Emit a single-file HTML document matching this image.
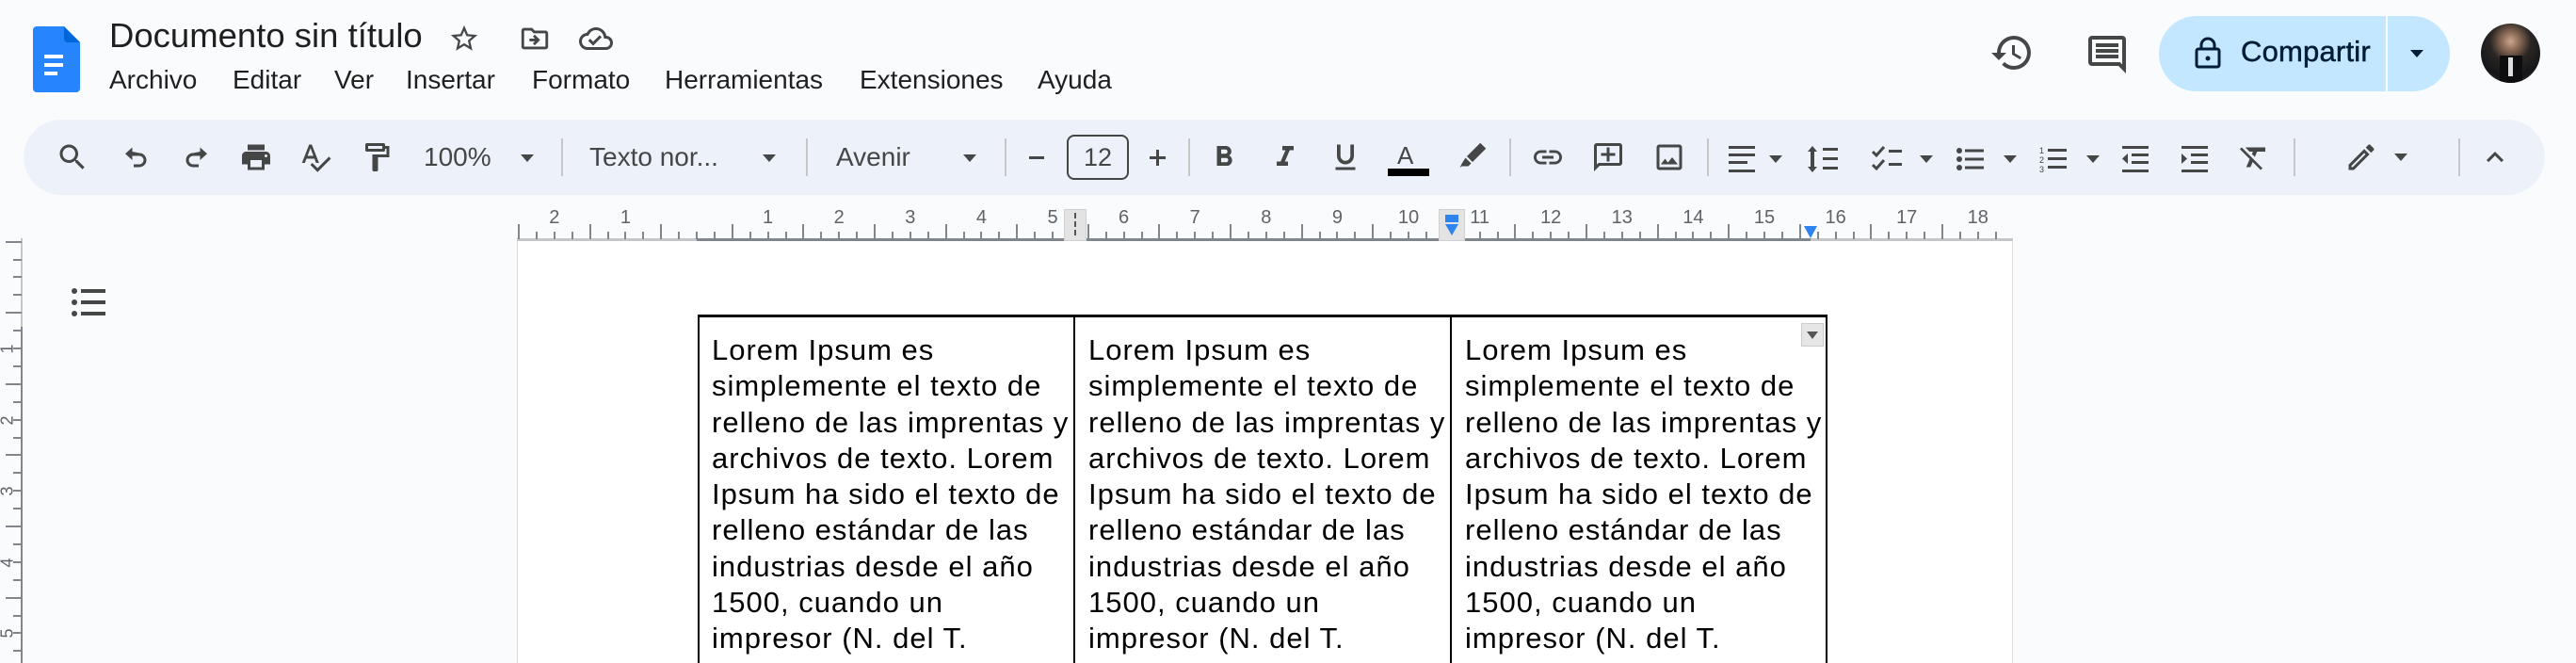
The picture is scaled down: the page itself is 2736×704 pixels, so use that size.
<!DOCTYPE html>
<html><head><meta charset="utf-8">
<style>
*{margin:0;padding:0;box-sizing:border-box}
html{width:2736px;height:704px;overflow:hidden}
body{width:2736px;height:704px;overflow:hidden;background:#f9fbfd;font-family:"Liberation Sans",sans-serif;position:relative;color:#1f1f1f}
.a{position:absolute}
svg.i{position:absolute;fill:#444746}
.menu span{position:absolute;top:69px;font-size:28px;color:#1f1f1f}
.tb{position:absolute;left:25px;top:127px;width:2678px;height:80px;background:#edf2fa;border-radius:40px}
.sep{position:absolute;top:147px;width:2px;height:40px;background:#c7c7c7}
.dd{position:absolute;width:0;height:0;border-left:7px solid transparent;border-right:7px solid transparent;border-top:8px solid #444746}
.tt{position:absolute;font-size:28px;color:#444746;top:151px}
.rn{position:absolute;top:220px;font-size:20px;color:#5f6368;width:30px;text-align:center;margin-left:-15px}
.cell{position:absolute;top:353px;font-size:31px;line-height:38.3px;letter-spacing:1px;white-space:nowrap;color:#000}
#clip{position:absolute;left:0;top:0;width:2736px;height:704px;overflow:hidden}
</style></head><body><div id="clip">

<svg class="a" style="left:35px;top:28px" width="50" height="70" viewBox="0 0 50 70">
<path d="M4 0H33L50 17V66a4 4 0 0 1-4 4H4a4 4 0 0 1-4-4V4a4 4 0 0 1 4-4z" fill="#2684fc"/>
<path d="M33 0L50 17H37a4 4 0 0 1-4-4z" fill="#0066da"/>
<rect x="12" y="30" width="20" height="4" fill="#fff"/><rect x="12" y="39" width="20" height="4" fill="#fff"/><rect x="12" y="48" width="14" height="4" fill="#fff"/>
</svg>
<div class="a" style="left:116px;top:17px;font-size:36.5px;color:#1f1f1f">Documento sin título</div>
<svg class="i" style="left:476px;top:24px" width="34" height="34" viewBox="0 0 24 24"><path d="M22 9.24l-7.19-.62L12 2 9.19 8.63 2 9.24l5.46 4.73L5.82 21 12 17.27 18.18 21l-1.63-7.03L22 9.24zM12 15.4l-3.76 2.27 1-4.28-3.32-2.88 4.38-.38L12 6.1l1.71 4.04 4.38.38-3.32 2.88 1 4.28L12 15.4z"/></svg>
<svg class="i" style="left:551px;top:24px" width="34" height="34" viewBox="0 0 24 24"><path d="M20 6h-8l-2-2H4c-1.1 0-2 .9-2 2v12c0 1.1.9 2 2 2h16c1.1 0 2-.9 2-2V8c0-1.1-.9-2-2-2zm0 12H4V6h5.17l2 2H20v10zm-7.84-6H8v2h4.16l-1.59 1.59L11.99 17 16 13.01 11.99 9l-1.41 1.41L12.16 12z"/></svg>
<svg class="i" style="left:615px;top:23px" width="36" height="36" viewBox="0 0 24 24"><path d="M19.35 10.04A7.49 7.49 0 0 0 12 4C9.11 4 6.6 5.64 5.35 8.04A5.994 5.994 0 0 0 0 14c0 3.310 2.690 6 6 6h13c2.76 0 5-2.24 5-5 0-2.64-2.05-4.78-4.65-4.96zM19 18H6c-2.21 0-4-1.79-4-4 0-2.05 1.53-3.76 3.56-3.97l1.07-.11.5-.95A5.469 5.469 0 0 1 12 6c2.62 0 4.88 1.86 5.39 4.43l.3 1.5 1.53.11A2.98 2.98 0 0 1 22 15c0 1.65-1.35 3-3 3zm-9-3.820l-2.09-2.09L6.5 13.5 10 17l6.01-6.01-1.41-1.41z"/></svg>

<div class="menu">
<span style="left:116px">Archivo</span><span style="left:247px">Editar</span><span style="left:355px">Ver</span><span style="left:431px">Insertar</span><span style="left:565px">Formato</span><span style="left:706px">Herramientas</span><span style="left:913px">Extensiones</span><span style="left:1102px">Ayuda</span>
</div>

<svg class="i" style="left:2113px;top:32px" width="48" height="48" viewBox="0 0 24 24"><path d="M13 3a9 9 0 0 0-9 9H1l3.89 3.89.07.14L9 12H6c0-3.87 3.13-7 7-7s7 3.13 7 7-3.13 7-7 7c-1.93 0-3.68-.79-4.94-2.06l-1.42 1.42A8.954 8.954 0 0 0 13 21a9 9 0 0 0 0-18zm-1 5v5l4.28 2.54.72-1.21-3.5-2.08V8H12z"/></svg>
<svg class="i" style="left:2214px;top:34px" width="48" height="48" viewBox="0 0 24 24"><path d="M21.99 4c0-1.1-.89-2-1.99-2H4c-1.1 0-2 .9-2 2v12c0 1.1.9 2 2 2h14l4 4-.01-18zM20 4v13.17L18.83 16H4V4h16zM6 12h12v2H6zm0-3h12v2H6zm0-3h12v2H6z"/></svg>
<div class="a" style="left:2293px;top:17px;width:309px;height:80px;background:#c2e7ff;border-radius:40px"></div>
<div class="a" style="left:2534px;top:17px;width:2px;height:80px;background:#f9fbfd"></div>
<svg class="a" style="left:2330px;top:39px" width="30" height="34" viewBox="0 0 30 34"><rect x="3" y="13" width="24" height="19" rx="2" fill="none" stroke="#001d35" stroke-width="3"/><path d="M8 13V9a7 7 0 0 1 14 0v4" fill="none" stroke="#001d35" stroke-width="3"/><circle cx="15" cy="23" r="2.5" fill="#001d35"/></svg>
<div class="a" style="left:2380px;top:37px;font-size:31px;color:#001d35;letter-spacing:0.2px;-webkit-text-stroke:0.5px #001d35">Compartir</div>
<div class="dd" style="left:2560px;top:53px;border-top-color:#001d35"></div>
<div class="a" style="left:2635px;top:25px;width:63px;height:63px;border-radius:50%;background:radial-gradient(circle at 50% 30%,#c9a58c 0,#8a6a55 18%,#2a2623 40%,#15161a 70%,#3a3a40 100%);overflow:hidden"><div class="a" style="left:20px;top:34px;width:24px;height:30px;background:#0d0d10"></div><div class="a" style="left:29px;top:36px;width:5px;height:20px;background:#ddd"></div></div>

<div class="tb"></div>
<svg class="i" style="left:59px;top:149px" width="36" height="36" viewBox="0 0 24 24"><path d="M15.5 14h-.79l-.28-.27A6.47 6.47 0 0 0 16 9.5 6.5 6.5 0 1 0 9.5 16c1.61 0 3.09-.59 4.23-1.57l.27.28v.79l5 4.99L20.49 19l-4.99-5zm-6 0C7.01 14 5 11.99 5 9.5S7.01 5 9.5 5 14 7.01 14 9.5 11.99 14 9.5 14z"/></svg>
<svg class="i" style="left:127px;top:149px" width="36" height="36" viewBox="0 0 24 24"><path d="M9 10V7l-5 4.5L9 16v-3h5a3 3 0 0 1 0 6h-4v2h4a5 5 0 0 0 0-10z" transform="translate(0,-2)"/></svg>
<svg class="i" style="left:190px;top:149px" width="36" height="36" viewBox="0 0 24 24"><path d="M15 10V7l5 4.5L15 16v-3h-5a3 3 0 0 0 0 6h4v2h-4a5 5 0 0 1 0-10z" transform="translate(0,-2)"/></svg>
<svg class="i" style="left:254px;top:149px" width="36" height="36" viewBox="0 0 24 24"><path d="M19 8H5c-1.66 0-3 1.34-3 3v6h4v4h12v-4h4v-6c0-1.66-1.34-3-3-3zm-3 11H8v-5h8v5zm3-7c-.55 0-1-.45-1-1s.45-1 1-1 1 .45 1 1-.45 1-1 1zm-1-9H6v4h12V3z"/></svg>
<svg class="i" style="left:317px;top:149px" width="36" height="36" viewBox="0 0 24 24"><path d="M12.45 16h2.09L9.43 3H7.57L2.46 16h2.09l1.12-3h5.64l1.14 3zm-6.02-5L8.5 5.48 10.57 11H6.43zm15.16.59l-8.09 8.09L9.83 16l-1.41 1.41 5.09 5.09L23 13l-1.41-1.41z"/></svg>
<svg class="i" style="left:382px;top:149px" width="36" height="36" viewBox="0 0 24 24"><path d="M18 4V3c0-.55-.45-1-1-1H5c-.55 0-1 .45-1 1v4c0 .55.45 1 1 1h12c.55 0 1-.45 1-1V6h1v4H9v11c0 .55.45 1 1 1h2c.55 0 1-.45 1-1v-9h8V4h-3zm-2 2H6V4h10v2z"/></svg>
<div class="tt" style="left:450px">100%</div><div class="dd" style="left:553px;top:164px"></div>
<div class="sep" style="left:596px"></div>
<div class="tt" style="left:626px">Texto nor...</div><div class="dd" style="left:810px;top:164px"></div>
<div class="sep" style="left:856px"></div>
<div class="tt" style="left:888px">Avenir</div><div class="dd" style="left:1023px;top:164px"></div>
<div class="sep" style="left:1067px"></div>
<div class="a" style="left:1093px;top:166px;width:16px;height:3px;background:#444746"></div>
<div class="a" style="left:1133px;top:143px;width:66px;height:48px;border:2px solid #444746;border-radius:8px;font-size:27px;color:#444746;text-align:center;line-height:44px">12</div>
<div class="a" style="left:1221px;top:166px;width:17px;height:3px;background:#444746"></div><div class="a" style="left:1228px;top:159px;width:3px;height:17px;background:#444746"></div>
<div class="sep" style="left:1262px"></div>
<svg class="i" style="left:1282px;top:149px" width="36" height="36" viewBox="0 0 24 24"><path d="M15.6 10.79c.97-.67 1.65-1.77 1.65-2.79 0-2.26-1.75-4-4-4H7v14h7.04c2.09 0 3.71-1.7 3.71-3.79 0-1.52-.86-2.82-2.15-3.42zM10 6.5h3c.83 0 1.5.67 1.5 1.5s-.67 1.5-1.5 1.5h-3v-3zm3.5 9H10v-3h3.5c.83 0 1.5.67 1.5 1.5s-.67 1.5-1.5 1.5z"/></svg>
<svg class="i" style="left:1347px;top:149px" width="36" height="36" viewBox="0 0 24 24"><path d="M10 4v3h2.21l-3.42 8H6v3h8v-3h-2.21l3.42-8H18V4z"/></svg>
<svg class="i" style="left:1411px;top:149px" width="36" height="36" viewBox="0 0 24 24"><path d="M12 17c3.31 0 6-2.69 6-6V3h-2.5v8c0 1.93-1.57 3.5-3.5 3.5S8.5 12.93 8.5 11V3H6v8c0 3.31 2.69 6 6 6zm-7 2v2h14v-2H5z"/></svg>
<div class="a" style="left:1484px;top:150px;font-size:26px;color:#444746">A</div>
<div class="a" style="left:1474px;top:179px;width:44px;height:8px;background:#000"></div>
<svg class="i" style="left:1546px;top:148px" width="36" height="36" viewBox="0 0 24 24"><path d="M17.5 2.5l4 4-9.5 9.5-4-4zM7 13l4 4-2 2H4.5L3 20l1.5-3z"/></svg>
<div class="sep" style="left:1603px"></div>
<svg class="i" style="left:1626px;top:149px" width="36" height="36" viewBox="0 0 24 24"><path d="M3.9 12c0-1.71 1.39-3.1 3.1-3.1h4V7H7c-2.76 0-5 2.24-5 5s2.24 5 5 5h4v-1.9H7c-1.71 0-3.1-1.39-3.1-3.1zM8 13h8v-2H8v2zm9-6h-4v1.9h4c1.71 0 3.1 1.39 3.1 3.1s-1.39 3.1-3.1 3.1h-4V17h4c2.76 0 5-2.24 5-5s-2.24-5-5-5z"/></svg>
<svg class="i" style="left:1690px;top:149px" width="36" height="36" viewBox="0 0 24 24"><path d="M20 2H4c-1.1 0-2 .9-2 2v18l4-4h14c1.1 0 2-.9 2-2V4c0-1.1-.9-2-2-2zm0 14H5.17L4 17.17V4h16v12zM11 5h2v4h4v2h-4v4h-2v-4H7V9h4z"/></svg>
<svg class="i" style="left:1755px;top:149px" width="36" height="36" viewBox="0 0 24 24"><path d="M19 3H5c-1.1 0-2 .9-2 2v14c0 1.1.9 2 2 2h14c1.1 0 2-.9 2-2V5c0-1.1-.9-2-2-2zm0 16H5V5h14v14zm-5-7l-3 3.72L9 13l-3 4h12l-4-5z"/></svg>
<div class="sep" style="left:1813px"></div>
<svg class="i" style="left:1836px;top:155px" width="28" height="28" viewBox="0 0 28 28"><rect x="0" y="0" width="28" height="3"/><rect x="0" y="8" width="28" height="3"/><rect x="0" y="16" width="20" height="3"/><rect x="0" y="25" width="28" height="3"/></svg>
<div class="dd" style="left:1879px;top:165px"></div>
<svg class="i" style="left:1920px;top:155px" width="34" height="28" viewBox="0 0 34 28"><path d="M5 0l5 6H7v16h3l-5 6-5-6h3V6H0z"/><rect x="16" y="2" width="16" height="3"/><rect x="16" y="12" width="16" height="3"/><rect x="16" y="22" width="16" height="3"/></svg>
<svg class="i" style="left:1988px;top:154px" width="34" height="30" viewBox="0 0 34 30"><path d="M1 7l4 4 8-9" fill="none" stroke="#444746" stroke-width="3"/><path d="M1 21l4 4 8-9" fill="none" stroke="#444746" stroke-width="3"/><rect x="18" y="5" width="14" height="3"/><rect x="18" y="19" width="14" height="3"/></svg>
<div class="dd" style="left:2039px;top:165px"></div>
<svg class="i" style="left:2078px;top:157px" width="30" height="24" viewBox="0 0 30 24"><circle cx="3" cy="3" r="3"/><circle cx="3" cy="12" r="3"/><circle cx="3" cy="21" r="3"/><rect x="9" y="1.5" width="20" height="3"/><rect x="9" y="10.5" width="20" height="3"/><rect x="9" y="19.5" width="20" height="3"/></svg>
<div class="dd" style="left:2128px;top:165px"></div>
<svg class="i" style="left:2166px;top:154px" width="30" height="30" viewBox="0 0 30 30"><text x="0" y="9" font-size="9" font-family="Liberation Sans" fill="#444746">1</text><text x="0" y="19" font-size="9" font-family="Liberation Sans" fill="#444746">2</text><text x="0" y="29" font-size="9" font-family="Liberation Sans" fill="#444746">3</text><rect x="9" y="4" width="20" height="3"/><rect x="9" y="13" width="20" height="3"/><rect x="9" y="22" width="20" height="3"/></svg>
<div class="dd" style="left:2216px;top:165px"></div>
<svg class="i" style="left:2254px;top:155px" width="28" height="28" viewBox="0 0 28 28"><rect x="0" y="0" width="28" height="3"/><rect x="0" y="25" width="28" height="3"/><rect x="10" y="8" width="18" height="3"/><rect x="10" y="16" width="18" height="3"/><path d="M6 8v11l-6-5.5z"/></svg>
<svg class="i" style="left:2317px;top:155px" width="28" height="28" viewBox="0 0 28 28"><rect x="0" y="0" width="28" height="3"/><rect x="0" y="25" width="28" height="3"/><rect x="10" y="8" width="18" height="3"/><rect x="10" y="16" width="18" height="3"/><path d="M0 8v11l6-5.5z"/></svg>
<svg class="i" style="left:2376px;top:149px" width="36" height="36" viewBox="0 0 24 24"><path d="M3.27 5L2 6.27l6.97 6.97L6.5 19h3l1.57-3.66L16.73 21 18 19.73 3.55 5.27 3.27 5zM6 5v.18L8.82 8h2.4l-.72 1.68 2.1 2.1L14.21 8H20V5H6z"/></svg>
<div class="sep" style="left:2436px"></div>
<svg class="i" style="left:2490px;top:149px" width="36" height="36" viewBox="0 0 24 24"><path d="M3 17.25V21h3.75L17.81 9.94l-3.75-3.75L3 17.25zM5.92 19H5v-.92l9.06-9.06.92.92L5.92 19zM20.71 5.630l-2.34-2.34a.996.996 0 0 0-1.41 0l-1.83 1.83 3.75 3.75 1.83-1.83a.996.996 0 0 0 0-1.41z"/></svg>
<div class="dd" style="left:2543px;top:163px"></div>
<div class="sep" style="left:2611px"></div>
<svg class="i" style="left:2632px;top:149px" width="36" height="36" viewBox="0 0 24 24"><path d="M12 8l-6 6 1.41 1.41L12 10.83l4.59 4.58L18 14z"/></svg>

<div class="a" style="left:549px;top:256px;width:1589px;height:448px;background:#fff;border-left:1px solid #dadce0;border-right:1px solid #dadce0"></div>

<div class="a" style="left:549px;top:253px;width:1589px;height:3px;background:#c4c7c5"></div>
<div class="a" style="left:740px;top:253px;width:1183px;height:3px;background:#80868b"></div>
<div id="rul"></div>
<div class="a" style="left:1130px;top:222px;width:24px;height:34px;background:#e3e3e3;border:1px solid #d0d0d0"></div>
<div class="a" style="left:1141px;top:226px;width:2px;height:24px;border-left:2px dashed #555"></div>
<div class="a" style="left:1528px;top:222px;width:28px;height:34px;background:#e3e3e3;border:1px solid #d0d0d0"></div>
<div class="a" style="left:1535px;top:228px;width:14px;height:8px;background:#2f83ee"></div>
<div class="a" style="left:1535px;top:238px;width:0;height:0;border-left:7px solid transparent;border-right:7px solid transparent;border-top:12px solid #2f83ee"></div>
<div class="a" style="left:1916px;top:240px;width:0;height:0;border-left:7px solid transparent;border-right:7px solid transparent;border-top:13px solid #2f83ee"></div>

<div class="a" style="left:22px;top:253px;width:2px;height:95px;background:#c4c7c5"></div>
<div class="a" style="left:22px;top:347px;width:2px;height:357px;background:#80868b"></div>
<div id="vrul"></div>

<svg class="i" style="left:75px;top:304px" width="38" height="32" viewBox="0 0 38 32"><circle cx="4" cy="5" r="3"/><circle cx="4" cy="17" r="3"/><circle cx="4" cy="29" r="3"/><rect x="11" y="3" width="26" height="4"/><rect x="11" y="15" width="26" height="4"/><rect x="11" y="27" width="26" height="4"/></svg>

<div class="a" style="left:741px;top:334px;width:1200px;height:3px;background:#000"></div>
<div class="a" style="left:741px;top:334px;width:2px;height:370px;background:#000"></div>
<div class="a" style="left:1140px;top:334px;width:2px;height:370px;background:#000"></div>
<div class="a" style="left:1540px;top:334px;width:2px;height:370px;background:#000"></div>
<div class="a" style="left:1939px;top:334px;width:2px;height:370px;background:#000"></div>
<div class="a" style="left:1913px;top:343px;width:24px;height:25px;background:#e6e6e6;border:1px solid #ccc"></div>
<div class="a" style="left:1919px;top:352px;width:0;height:0;border-left:6px solid transparent;border-right:6px solid transparent;border-top:8px solid #555"></div>

<div class="cell" style="left:756px">Lorem Ipsum es<br>simplemente el texto de<br>relleno de las imprentas y<br>archivos de texto. Lorem<br>Ipsum ha sido el texto de<br>relleno estándar de las<br>industrias desde el año<br>1500, cuando un<br>impresor (N. del T.<br>persona que se dedica</div>
<div class="cell" style="left:1156px">Lorem Ipsum es<br>simplemente el texto de<br>relleno de las imprentas y<br>archivos de texto. Lorem<br>Ipsum ha sido el texto de<br>relleno estándar de las<br>industrias desde el año<br>1500, cuando un<br>impresor (N. del T.<br>persona que se dedica</div>
<div class="cell" style="left:1556px">Lorem Ipsum es<br>simplemente el texto de<br>relleno de las imprentas y<br>archivos de texto. Lorem<br>Ipsum ha sido el texto de<br>relleno estándar de las<br>industrias desde el año<br>1500, cuando un<br>impresor (N. del T.<br>persona que se dedica</div>
</div>
<script>
var h='',u=75.6,z=740;
for(var k=-10;k<=73;k++){var x=z+k*u/4;if(x<549||x>2137)continue;var m=((k%4)+4)%4;
 if(m==0){var n=k/4;if(n!=0)h+='<div class="rn" style="left:'+x+'px">'+Math.abs(n)+'</div>';h+='<div class="a" style="left:'+(x-1)+'px;top:246px;width:2px;height:8px;background:#80868b"></div>';}
 else if(m==2)h+='<div class="a" style="left:'+(x-1)+'px;top:238px;width:2px;height:16px;background:#80868b"></div>';
 else h+='<div class="a" style="left:'+(x-1)+'px;top:246px;width:2px;height:8px;background:#80868b"></div>';}
document.getElementById('rul').innerHTML=h;
var v='',z2=294.4;
for(var k=-2;k<=21;k++){var y=z2+k*u/4;if(y<254||y>700)continue;var m=((k%4)+4)%4;
 if(m==0&&k>0)v+='<div class="a" style="left:-2px;top:'+(y-10)+'px;font-size:18px;color:#5f6368;transform:rotate(-90deg);width:20px;text-align:center">'+(k/4)+'</div><div class="a" style="left:14px;top:'+(y-1)+'px;width:9px;height:2px;background:#80868b"></div>';
 else v+='<div class="a" style="left:'+(m==2?6:14)+'px;top:'+(y-1)+'px;width:'+(m==2?17:9)+'px;height:2px;background:#80868b"></div>';}
document.getElementById('vrul').innerHTML=v;
</script>
</body></html>
